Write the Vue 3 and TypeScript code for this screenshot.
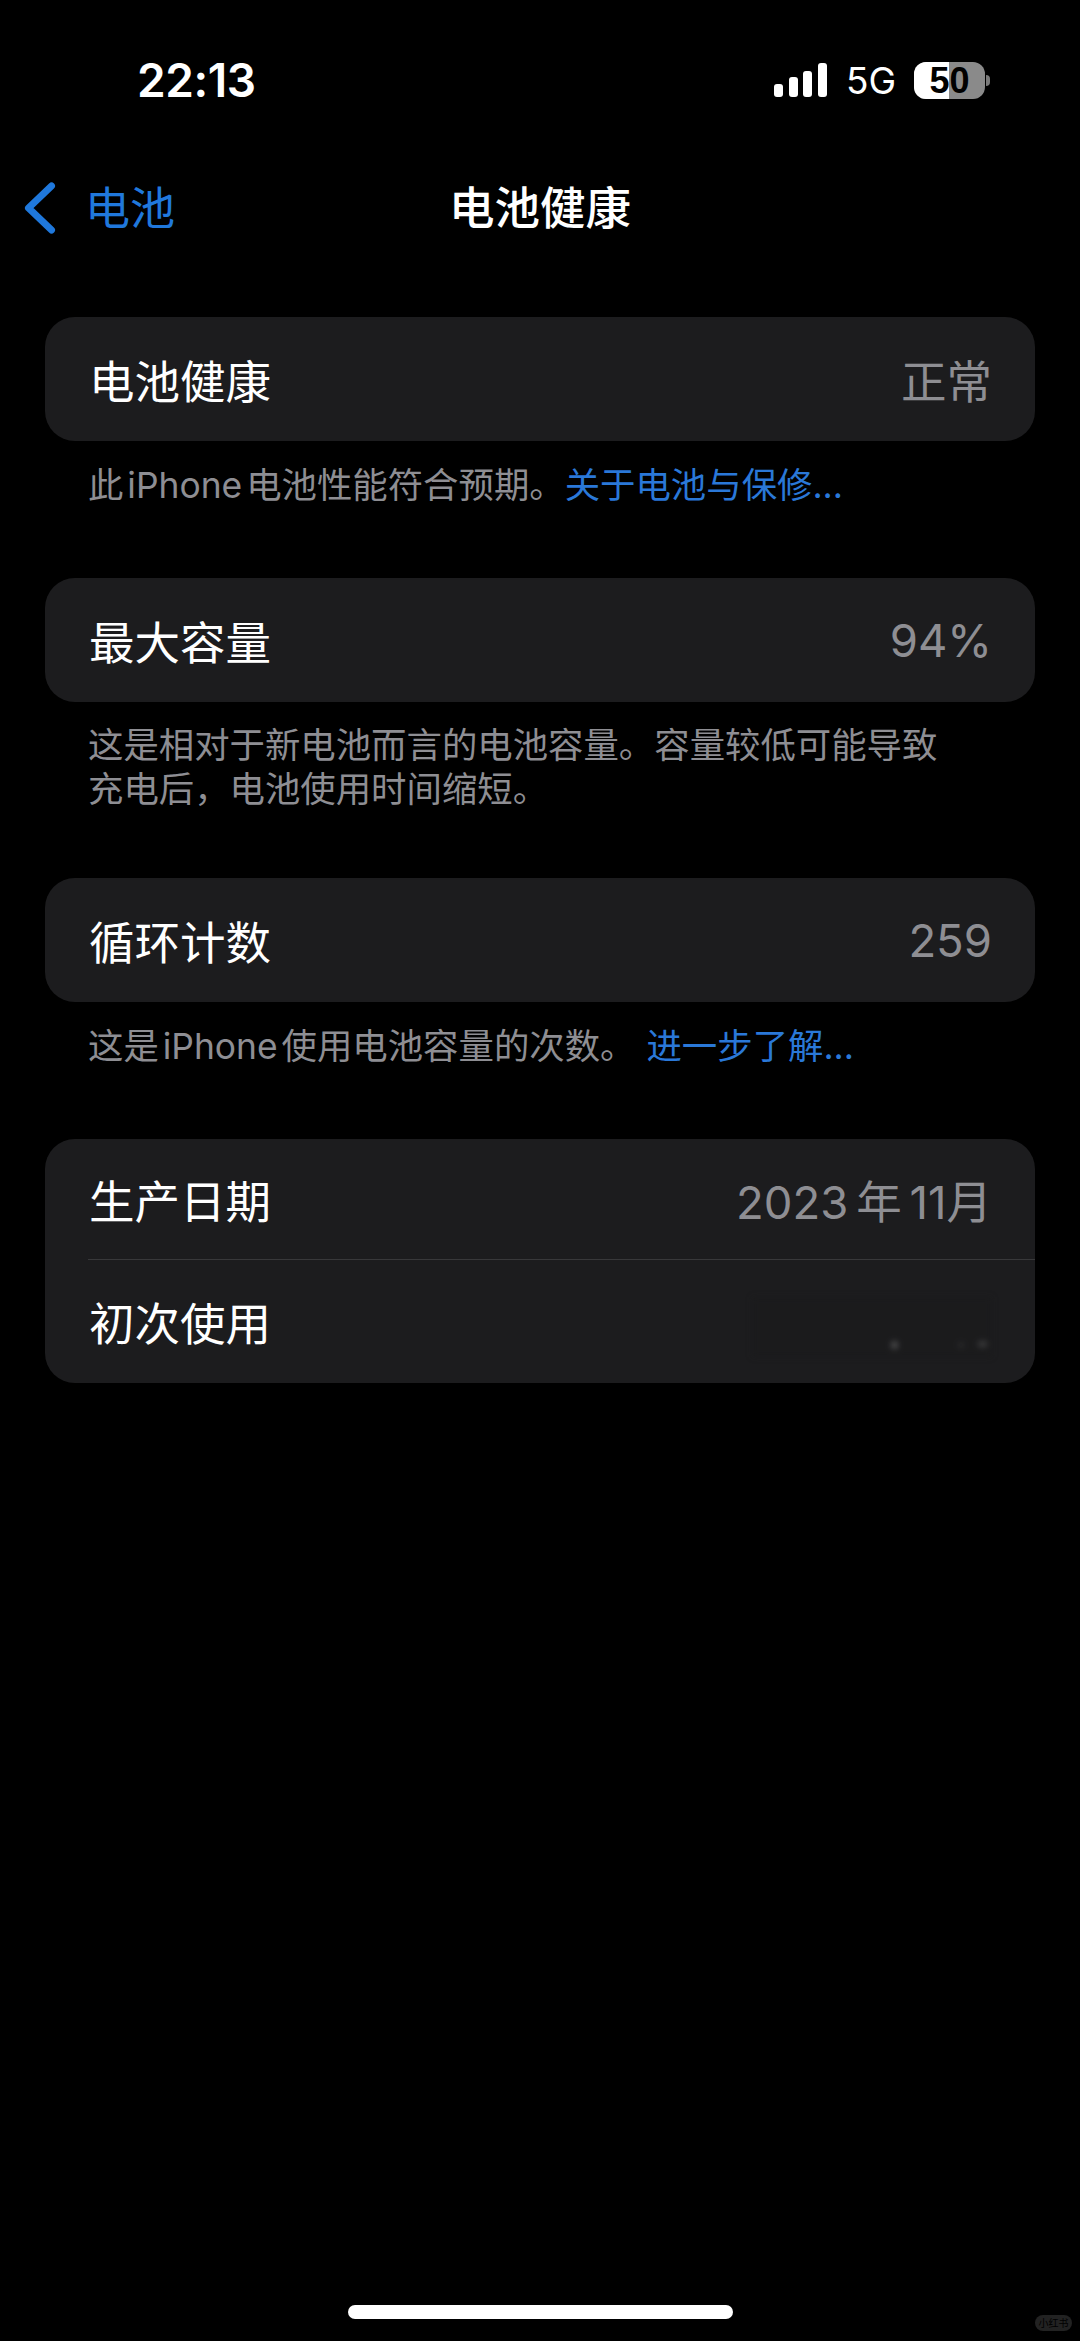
<script setup lang="ts">
interface Row { label: string; value?: string; blurred?: boolean }
interface Section { rows: Row[]; note?: string[]; link?: string; gap?: boolean }

const sections: Section[] = [
  { rows: [{ label: '电池健康', value: '正常' }], note: ['此 iPhone 电池性能符合预期。'], link: '关于电池与保修...' },
  { rows: [{ label: '最大容量', value: '94%' }], note: ['这是相对于新电池而言的电池容量。容量较低可能导致', '充电后，电池使用时间缩短。'] },
  { rows: [{ label: '循环计数', value: '259' }], note: ['这是 iPhone 使用电池容量的次数。'], link: '进一步了解...', gap: true },
  { rows: [{ label: '生产日期', value: '2023 年 11月' }, { label: '初次使用', blurred: true }] },
]
const bars: number[] = [13, 20, 26, 34]
</script>

<template>
  <div class="screen">
    <header class="status">
      <span class="time">22:13</span>
      <div class="status-right">
        <div class="signal">
          <i v-for="h in bars" :key="h" class="bar" :style="{ height: h + 'px' }"></i>
        </div>
        <span class="net">5G</span>
        <div class="battery-wrap">
          <div class="battery"><div class="fill"></div><span class="pct">50</span></div>
          <i class="nub"></i>
        </div>
      </div>
    </header>

    <nav class="nav">
      <div class="back">
        <svg class="chev" width="34" height="54" viewBox="0 0 34 54" fill="none">
          <path d="M28.5 4 L5.5 26 L28.5 48" stroke="#1f78dc" stroke-width="7" stroke-linecap="round" stroke-linejoin="round" />
        </svg>
        <span class="back-text">电池</span>
      </div>
      <h1 class="title">电池健康</h1>
    </nav>

    <main class="list">
      <section v-for="(s, i) in sections" :key="i" class="section">
        <div class="card">
          <div v-for="r in s.rows" :key="r.label" class="row">
            <span class="label">{{ r.label }}</span>
            <span v-if="r.value" class="value">{{ r.value }}</span>
            <div v-else class="smudge">
              <i class="dot d1"></i><i class="dot d2"></i><i class="dot d3"></i>
            </div>
          </div>
        </div>
        <p v-if="s.note" class="note">
          <template v-for="(line, j) in s.note" :key="j">
            <br v-if="j > 0" />{{ line }}
          </template>
          <a v-if="s.link" class="link" :class="{ spaced: s.gap }">{{ s.link }}</a>
        </p>
      </section>
    </main>

    <div class="home"></div>
    <div class="mark">小红书</div>
  </div>
</template>

<style>
html, body { margin: 0; background: #000; }
</style>

<style scoped>
.screen {
  position: relative;
  width: 1080px;
  height: 2341px;
  overflow: hidden;
  background: #000;
  color: #fff;
  font-family: Inter, "Noto Sans CJK SC", sans-serif;
}
.status {
  height: 78px;
  padding: 41px 90px 0 137px;
  display: flex;
  justify-content: space-between;
  align-items: center;
  box-sizing: content-box;
}
.time { font-size: 46px; font-weight: 600; letter-spacing: -0.4px; }
.status-right { display: flex; align-items: center; }
.signal { display: flex; align-items: flex-end; gap: 5.6px; height: 34px; margin-right: 19px; }
.bar { display: block; width: 9px; background: #fff; border-radius: 3px; }
.net { font-size: 37px; font-weight: 400; width: 68px; }
.battery-wrap { display: flex; align-items: center; gap: 1px; }
.battery {
  position: relative;
  width: 71px;
  height: 37px;
  border-radius: 12px;
  background: #8a8a8a;
  text-align: center;
}
.fill { position: absolute; left: 0; top: 0; bottom: 0; width: 35px; background: #fff; border-radius: 12px 0 0 12px; }
.pct { position: relative; display: block; font-family: "Liberation Sans", sans-serif; font-size: 36px; font-weight: 700; line-height: 37px; color: #000; }
.nub { display: block; width: 4px; height: 11px; background: #7a7a7a; border-radius: 0 4px 4px 0; }
.nav { position: relative; height: 56px; margin-top: 62px; display: flex; align-items: center; justify-content: center; }
.back { position: absolute; left: 23px; top: 0; display: flex; align-items: center; gap: 28px; height: 56px; }
.back-text { font-size: 45px; color: #2078dc; line-height: 56px; }
.title { margin: 0; font-size: 45.5px; font-weight: 500; line-height: 56px; }
.list { padding: 80px 45px 0; display: flex; flex-direction: column; }
.card { background: #1c1c1e; border-radius: 30px; overflow: hidden; }
.row {
  position: relative;
  height: 124px;
  padding: 0 43px 0 44px;
  display: flex;
  align-items: center;
  justify-content: space-between;
  box-sizing: border-box;
}
.row:first-child:not(:last-child) { height: 120px; }
.row + .row::before {
  content: "";
  position: absolute;
  top: 0; left: 43px; right: 0;
  height: 1px;
  background: #38383a;
}
.label { font-size: 45.5px; }
.value { font-size: 45.5px; color: #8e8e93; word-spacing: -5px; }
.note { margin: 23px 0 70px; padding: 0 43px; font-size: 35.4px; line-height: 44px; color: #8e8e93; word-spacing: -6px; }
.section:nth-child(2) .note { margin: 22px 0 66px; }
.section:nth-child(3) .note { margin: 23px 0 70px; }
.link { color: #2a78d8; word-spacing: 0; }
.link.spaced { margin-left: 11px; }
.smudge { position: relative; width: 240px; height: 60px; margin-top: 12px; background: rgba(24, 24, 26, 0.28); filter: blur(3px); }
.dot { position: absolute; background: #7a7a7a; border-radius: 50%; }
.d1 { left: 140px; top: 45px; width: 5px; height: 6px; }
.d2 { left: 207px; top: 46px; width: 4px; height: 4px; opacity: .4; }
.d3 { left: 226px; top: 45px; width: 9px; height: 4px; opacity: .6; }
.home { position: absolute; left: 348px; top: 2305px; width: 385px; height: 14px; border-radius: 7px; background: #fff; }
.mark {
  position: absolute; left: 1035px; top: 2315px; width: 37px; height: 16px;
  border-radius: 8px; background: #222; color: #000; font-size: 10px; line-height: 16px; text-align: center;
}
</style>
